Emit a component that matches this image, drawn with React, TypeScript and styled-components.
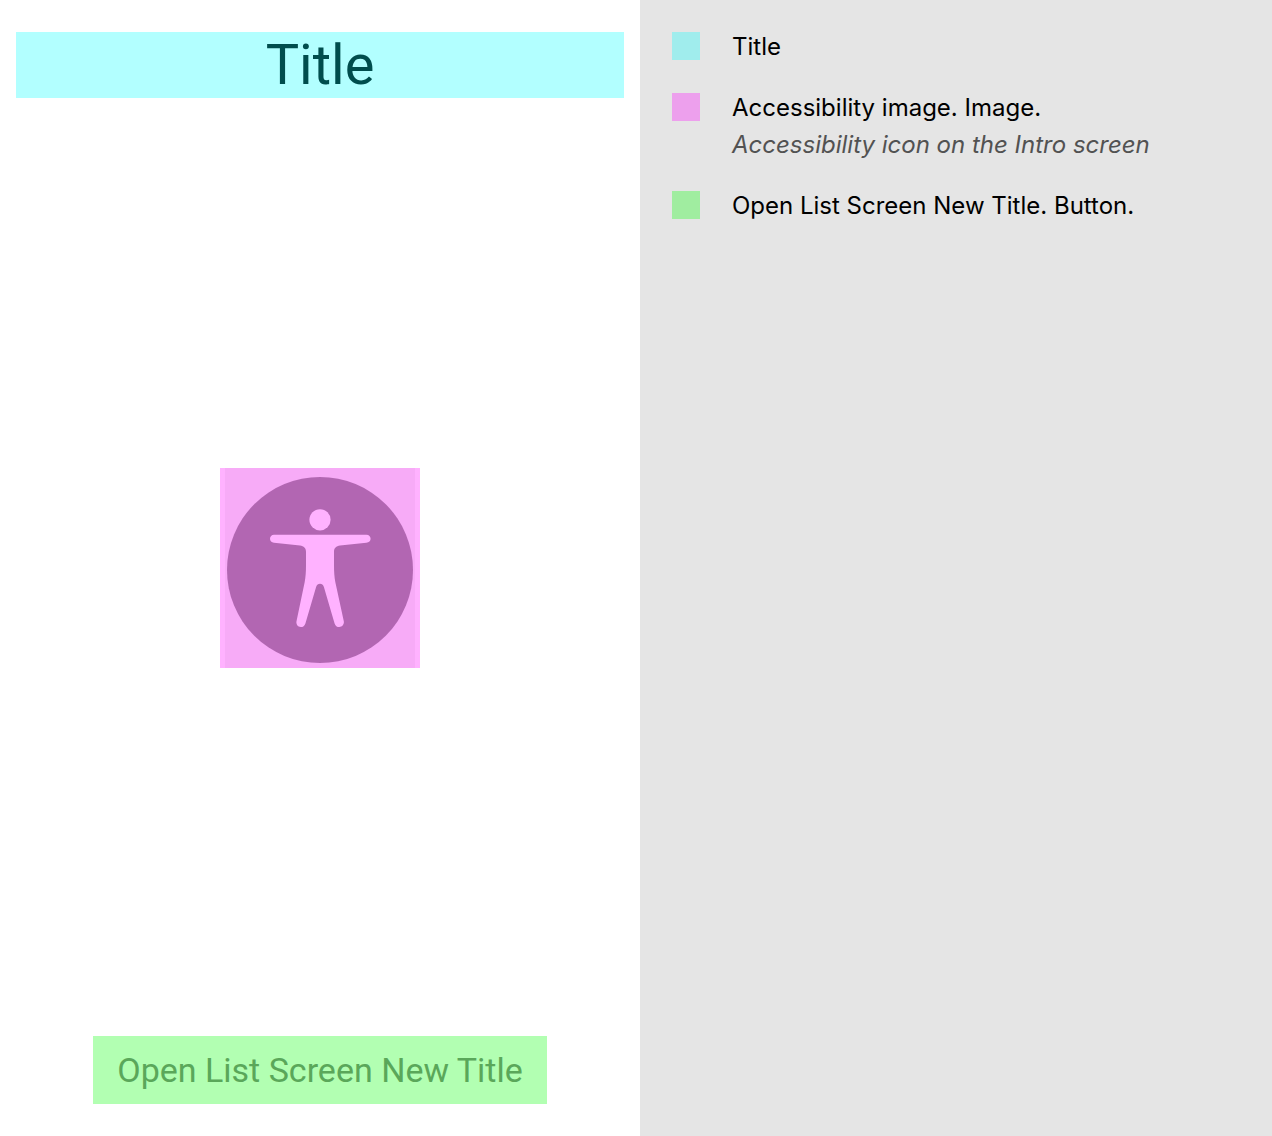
import React from "react";
import styled, { createGlobalStyle } from "styled-components";

const GlobalStyle = createGlobalStyle`
  *, *::before, *::after { box-sizing: border-box; }
  body { margin: 0; background: #ffffff; }
`;

const Layout = styled.div`
  display: grid;
  grid-template-columns: 640fr 632fr;
  min-height: 100vh;
`;

const Screen = styled.main`
  display: grid;
  grid-template-rows: 1fr auto 1fr;
  padding: 32px 16px;
  font-family: Roboto, sans-serif;
`;

const Heading = styled.h1`
  align-self: start;
  margin: 0;
  background: #b2ffff;
  color: #004d4d;
  font-size: 56px;
  font-weight: 400;
  line-height: 66px;
  text-align: center;
`;

const Picture = styled.svg`
  display: block;
  justify-self: center;
  width: 200px;
  height: 200px;
  background: #ffb2ff;
`;

const OpenButton = styled.button`
  align-self: end;
  justify-self: center;
  padding: 14px 24px;
  border: 0;
  background: #b2ffb2;
  color: #5aa75a;
  font-family: inherit;
  font-size: 34px;
  line-height: 40px;
  cursor: pointer;
`;

const Legend = styled.aside`
  background: #e5e5e5;
  padding: 28px 32px;
  font-family: Inter, sans-serif;
`;

const Entries = styled.ul`
  display: flex;
  flex-direction: column;
  gap: 24px;
  margin: 0;
  padding: 0;
  list-style: none;
`;

const Entry = styled.li`
  display: flex;
  align-items: flex-start;
  gap: 32px;
`;

const Swatch = styled.span<{ $color: string }>`
  flex: none;
  width: 28px;
  height: 28px;
  margin-top: 4px;
  background: ${({ $color }) => $color};
`;

const Description = styled.p`
  margin: 0;
  color: #000000;
  font-size: 24px;
  line-height: 37px;
`;

const Hint = styled(Description)`
  color: #525252;
  font-style: italic;
`;

const entries = [
  { color: "#a0eded", text: "Title" },
  {
    color: "#eda0ed",
    text: "Accessibility image. Image.",
    hint: "Accessibility icon on the Intro screen",
  },
  { color: "#a0eda0", text: "Open List Screen New Title. Button." },
];

function AccessibilityPicture() {
  return (
    <Picture viewBox="0 0 200 200" role="img" aria-label="Accessibility image">
      <rect x="5" width="190" height="200" fill="#f7abf7" />
      <circle cx="100" cy="102" r="93" fill="#b266b2" />
      <circle cx="100" cy="51.8" r="10.6" fill="#ffb2ff" />
      <path
        fill="#ffb2ff"
        d="M54 66.7H146.4C149 66.7 150.6 68.5 150.6 70.8C150.6 73 149 74.6 146.4 74.8L120 77.6C116.2 78.1 114 80 114 84V97C114 104 114.4 109 115.3 114L123.8 153.3C124.4 156.2 122.2 159 119.2 159C117 159 115.3 157.8 114.6 155.4L103.9 119C103.2 116.8 101.8 115.7 100 115.7C98.2 115.7 96.8 116.8 96.1 119L85.4 155.4C84.7 157.8 83 159 80.8 159C77.8 159 75.9 156.2 76.5 153.3L84.7 114C85.6 109 86 104 86 97V84C86 80 83.8 78.1 80 77.6L54 74.8C51.5 74.6 50 73 50 70.8C50 68.5 51.5 66.7 54 66.7Z"
      />
    </Picture>
  );
}

export default function App() {
  return (
    <>
      <GlobalStyle />
      <Layout>
        <Screen>
          <Heading>Title</Heading>
          <AccessibilityPicture />
          <OpenButton type="button">Open List Screen New Title</OpenButton>
        </Screen>
        <Legend>
          <Entries>
            {entries.map(({ color, text, hint }) => (
              <Entry key={text}>
                <Swatch $color={color} />
                <div>
                  <Description>{text}</Description>
                  {hint && <Hint>{hint}</Hint>}
                </div>
              </Entry>
            ))}
          </Entries>
        </Legend>
      </Layout>
    </>
  );
}
